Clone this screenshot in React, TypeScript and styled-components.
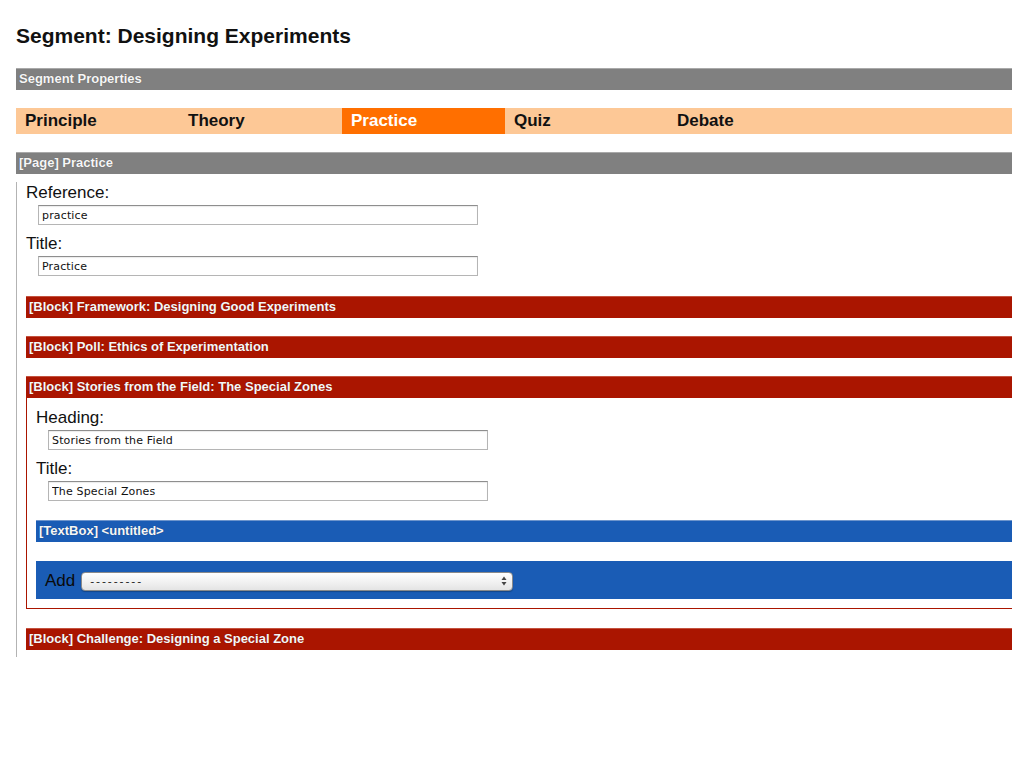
import React from "react";
import styled, { createGlobalStyle } from "styled-components";

const GlobalStyle = createGlobalStyle`
  html, body { margin: 0; padding: 0; background: #ffffff; }
  body { font-family: "Liberation Sans", Arial, sans-serif; color: #000; }
`;

const Page = styled.div`
  width: 996px;
  padding: 24px 0 0 16px;
  overflow: hidden;
`;

const Title = styled.h1`
  margin: 0;
  font-size: 21px;
  line-height: 24px;
  font-weight: bold;
  color: #111;
`;

const Bar = styled.div<{ $tone: "gray" | "red" | "blue"; $gap?: number }>`
  box-sizing: border-box;
  height: 22px;
  margin-top: ${(p) => p.$gap ?? 0}px;
  padding-left: 3px;
  border-top: 1px solid
    ${(p) => (p.$tone === "gray" ? "#a9a9a9" : p.$tone === "red" ? "#c4523f" : "#6e95cc")};
  background: ${(p) => (p.$tone === "gray" ? "#808080" : p.$tone === "red" ? "#aa1500" : "#1a5cb5")};
  color: #f6f6f6;
  font-size: 13px;
  font-weight: bold;
  line-height: 20px;
  white-space: nowrap;
  text-shadow: 0 0 1px rgba(0, 0, 0, 0.35);
`;

const Tabs = styled.div`
  display: flex;
  height: 26px;
  margin-top: 18px;
  background: #fdc896;
`;

const Tab = styled.div<{ $active?: boolean }>`
  box-sizing: border-box;
  width: 163px;
  padding-left: 9px;
  background: ${(p) => (p.$active ? "#ff6f00" : "transparent")};
  color: ${(p) => (p.$active ? "#ffffff" : "#111")};
  font-size: 17px;
  font-weight: bold;
  line-height: 26px;
`;

const PageBody = styled.div`
  border-left: 1px solid #b3b3b3;
  padding: 0 0 7px 9px;
`;

const Label = styled.div`
  margin-top: 8px;
  font-size: 17px;
  line-height: 21px;
  color: #111;
`;

const TextInput = styled.input`
  display: block;
  box-sizing: border-box;
  width: 440px;
  height: 20px;
  margin: 2px 0 0 12px;
  padding: 0 3px;
  border: 1px solid #b5b5b5;
  border-top-color: #8e8e8e;
  box-shadow: inset 0 1px 1px rgba(0, 0, 0, 0.08);
  background: #fff;
  font-family: "DejaVu Sans", Verdana, sans-serif;
  font-size: 11px;
  letter-spacing: 0.15px;
  color: #111;
  outline: none;
`;

const Block = styled.div<{ $gap: number }>`
  margin-top: ${(p) => p.$gap}px;
`;

const BlockBody = styled.div`
  border-left: 1px solid #aa1500;
  border-bottom: 1px solid #aa1500;
  padding: 1px 0 9px 9px;
`;

const AddPanel = styled.div`
  display: flex;
  align-items: center;
  gap: 6px;
  height: 38px;
  margin-top: 19px;
  padding-left: 9px;
  background: #1a5cb5;
`;

const AddLabel = styled.span`
  font-size: 17px;
  line-height: 21px;
  color: #0a0a0a;
`;

const SelectWrap = styled.div`
  position: relative;
  width: 432px;
  height: 19px;
`;

const Select = styled.select`
  appearance: none;
  -webkit-appearance: none;
  box-sizing: border-box;
  width: 100%;
  height: 100%;
  margin: 0;
  padding: 0 0 0 8px;
  border: 1px solid #8a8a8a;
  border-radius: 4px;
  background: linear-gradient(#ffffff, #f1f1f1 55%, #e4e4e4);
  box-shadow: 0 1px 1px rgba(0, 0, 0, 0.25);
  font-family: "DejaVu Sans", Verdana, sans-serif;
  font-size: 11px;
  letter-spacing: 1.9px;
  color: #222;
  outline: none;
`;

const Arrows = styled.svg`
  position: absolute;
  right: 6px;
  top: 5px;
  pointer-events: none;
`;

const fields = (pairs: [string, string][]) =>
  pairs.map(([label, value]) => (
    <React.Fragment key={label}>
      <Label>{label}</Label>
      <TextInput defaultValue={value} readOnly />
    </React.Fragment>
  ));

export default function App() {
  const tabs = ["Principle", "Theory", "Practice", "Quiz", "Debate"];
  return (
    <>
      <GlobalStyle />
      <Page>
        <Title>Segment: Designing Experiments</Title>
        <Bar $tone="gray" $gap={20}>Segment Properties</Bar>
        <Tabs>
          {tabs.map((t) => (
            <Tab key={t} $active={t === "Practice"}>
              {t}
            </Tab>
          ))}
        </Tabs>
        <Bar $tone="gray" $gap={18}>[Page] Practice</Bar>
        <PageBody>
          {fields([
            ["Reference:", "practice"],
            ["Title:", "Practice"],
          ])}
          <Block $gap={20}>
            <Bar $tone="red">[Block] Framework: Designing Good Experiments</Bar>
          </Block>
          <Block $gap={18}>
            <Bar $tone="red">[Block] Poll: Ethics of Experimentation</Bar>
          </Block>
          <Block $gap={18}>
            <Bar $tone="red">[Block] Stories from the Field: The Special Zones</Bar>
            <BlockBody>
              {fields([
                ["Heading:", "Stories from the Field"],
                ["Title:", "The Special Zones"],
              ])}
              <Bar $tone="blue" $gap={19}>[TextBox] &lt;untitled&gt;</Bar>
              <AddPanel>
                <AddLabel>Add</AddLabel>
                <SelectWrap>
                  <Select defaultValue="">
                    <option value="">---------</option>
                  </Select>
                  <Arrows width="6" height="10" viewBox="0 0 6 10">
                    <path d="M3 0.5 L5.5 4 L0.5 4 Z" fill="#444" />
                    <path d="M3 9.5 L5.5 6 L0.5 6 Z" fill="#444" />
                  </Arrows>
                </SelectWrap>
              </AddPanel>
            </BlockBody>
          </Block>
          <Block $gap={19}>
            <Bar $tone="red">[Block] Challenge: Designing a Special Zone</Bar>
          </Block>
        </PageBody>
      </Page>
    </>
  );
}
